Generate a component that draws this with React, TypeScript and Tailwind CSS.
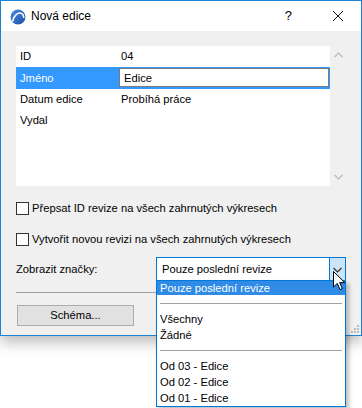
import React from "react";

const ROWS = [
  { label: "ID", value: "04" },
  { label: "Jméno", value: "Edice", editing: true },
  { label: "Datum edice", value: "Probíhá práce" },
  { label: "Vydal", value: "" },
];

function Logo() {
  return (
    <svg width="16" height="16" viewBox="0 0 16 16">
      <defs>
        <linearGradient id="lg" x1="0" y1="0" x2="1" y2="1">
          <stop offset="0" stopColor="#4a8fe0" />
          <stop offset="1" stopColor="#1c4fa8" />
        </linearGradient>
      </defs>
      <circle cx="8" cy="8" r="7.5" fill="url(#lg)" />
      <path d="M2.5 12.5 C4 6 8 3.5 11 4.2 C12.8 4.7 13.6 6.5 13.8 9" stroke="#fff" strokeWidth="1.6" fill="none" />
    </svg>
  );
}

function Chevron({ up, color }: { up?: boolean; color: string }) {
  return (
    <svg width="9" height="6" viewBox="0 0 9 6">
      <path d={up ? "M0.5 5 L4.5 1 L8.5 5" : "M0.5 1 L4.5 5 L8.5 1"} stroke={color} strokeWidth="1.2" fill="none" />
    </svg>
  );
}

function Checkbox({ label }: { label: string }) {
  return (
    <div className="flex items-center gap-[3px] h-[16px]">
      <div className="w-[13px] h-[13px] border border-[#333333] bg-white" />
      <span>{label}</span>
    </div>
  );
}

export default function App() {
  return (
    <div
      className="relative w-[362px] h-[408px] bg-white overflow-hidden text-[11.2px] text-black"
      style={{ fontFamily: '"Liberation Sans", Arial, sans-serif' }}
    >
      {/* dialog window */}
      <div className="w-[362px] h-[336px] border border-[#1883d7] flex flex-col shadow-[0_6px_14px_rgba(0,0,0,0.28)] bg-[#f0f0f0]">
        <div className="h-[30px] bg-white flex items-center shrink-0">
          <div className="ml-[9px] mt-[1px]">
            <Logo />
          </div>
          <span className="ml-[5px] text-[12px]">Nová edice</span>
          <span className="ml-auto mr-[40px] text-[13px]">?</span>
          <svg width="12" height="12" viewBox="0 0 12 12" className="mr-[17px]">
            <path d="M1 1 L11 11 M11 1 L1 11" stroke="#111" strokeWidth="1" />
          </svg>
        </div>

        <div className="flex-1 px-[15px] pt-[15px] relative">
          {/* property list */}
          <div className="flex h-[140px]">
            <div className="w-[314px] bg-white">
              {ROWS.map((r) => (
                <div
                  key={r.label}
                  className={`flex items-center h-[21.3px] ${r.editing ? "bg-[#3399ff]" : ""}`}
                >
                  <div className={`w-[103px] pl-[4px] ${r.editing ? "text-white" : ""}`}>{r.label}</div>
                  {r.editing ? (
                    <div className="w-[210px] h-[19px] border border-[#7a7a7a] bg-white pl-[4px] flex items-center">
                      {r.value}
                    </div>
                  ) : (
                    <div className="pl-[2px]">{r.value}</div>
                  )}
                </div>
              ))}
            </div>
            <div className="w-[16px] flex flex-col items-center justify-between py-[6px]">
              <Chevron up color="#b8b8b8" />
              <Chevron color="#b8b8b8" />
            </div>
          </div>

          <div className="mt-[14px] flex flex-col gap-[15px]">
            <Checkbox label="Přepsat ID revize na všech zahrnutých výkresech" />
            <Checkbox label="Vytvořit novou revizi na všech zahrnutých výkresech" />
          </div>

          <div className="mt-[10px] flex items-center h-[25px]">
            <span className="w-[140px]">Zobrazit značky:</span>
            <div className="w-[190px] h-[25px] border border-[#0078d7] bg-white flex items-center">
              <span className="flex-1 pl-[5px]">Pouze poslední revize</span>
              <div className="w-[16px] h-full bg-[#cce4f7] border-l border-[#0078d7] flex items-center justify-center">
                <Chevron color="#333" />
              </div>
            </div>
          </div>

          <div className="mt-[10px] h-px bg-[#a0a0a0]" />

          <button className="mt-[12px] ml-px w-[117px] h-[21px] bg-[#e1e1e1] border border-[#adadad] flex items-center justify-center">
            Schéma...
          </button>

          {/* resize grip */}
          <div className="absolute right-[2px] bottom-[2px] grid grid-cols-3 gap-px w-[8px]">
            <span />
            <span />
            <span className="w-[2px] h-[2px] bg-[#bcbcbc]" />
            <span />
            <span className="w-[2px] h-[2px] bg-[#bcbcbc]" />
            <span className="w-[2px] h-[2px] bg-[#bcbcbc]" />
            <span className="w-[2px] h-[2px] bg-[#bcbcbc]" />
            <span className="w-[2px] h-[2px] bg-[#bcbcbc]" />
            <span className="w-[2px] h-[2px] bg-[#bcbcbc]" />
          </div>
        </div>
      </div>

      {/* open dropdown list */}
      <div className="absolute left-[156px] top-[280px] w-[190px] h-[127px] bg-white border border-[#0078d7] shadow-[3px_3px_4px_rgba(0,0,0,0.25)] flex flex-col">
        <div className="h-[14px] bg-[#2f8be6] text-white pl-[3px] flex items-center">Pouze poslední revize</div>
        <div className="h-[16px] flex items-center px-[3px]">
          <div className="w-full h-px bg-[#a0a0a0] mt-[2px]" />
        </div>
        <div className="h-[16px] pl-[3px] flex items-center mt-[1px]">Všechny</div>
        <div className="h-[16px] pl-[3px] flex items-center">Žádné</div>
        <div className="h-[16px] flex items-center px-[3px]">
          <div className="w-full h-px bg-[#a0a0a0]" />
        </div>
        <div className="h-[16px] pl-[3px] flex items-center">Od 03 - Edice</div>
        <div className="h-[16px] pl-[3px] flex items-center">Od 02 - Edice</div>
        <div className="h-[16px] pl-[3px] flex items-center">Od 01 - Edice</div>
      </div>

      {/* mouse pointer */}
      <svg width="13" height="20" viewBox="0 0 13 20" className="absolute left-[333px] top-[271px]">
        <path d="M0.5 0.5 L0.5 16 L4.3 12.4 L7 18.6 L9.3 17.6 L6.7 11.6 L11.8 11.6 Z" fill="#fff" stroke="#000" strokeWidth="1" />
      </svg>
    </div>
  );
}
